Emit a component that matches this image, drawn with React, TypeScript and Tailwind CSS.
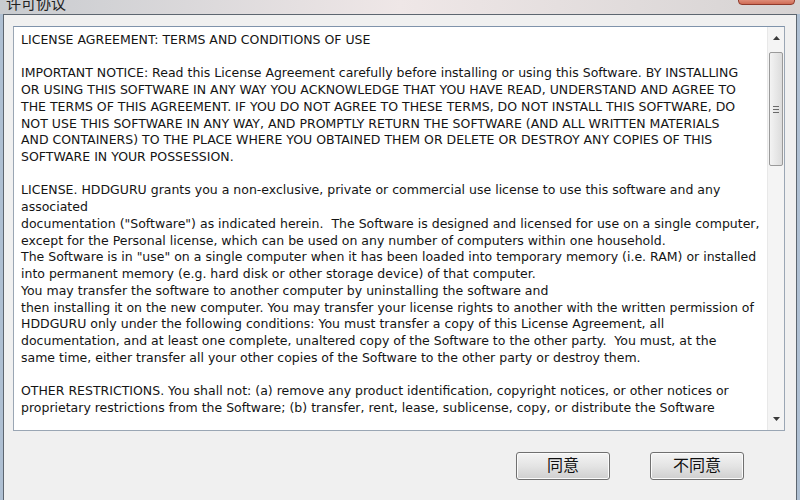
const lines = [
  "LICENSE AGREEMENT: TERMS AND CONDITIONS OF USE",
  "",
  "IMPORTANT NOTICE: Read this License Agreement carefully before installing or using this Software. BY INSTALLING",
  "OR USING THIS SOFTWARE IN ANY WAY YOU ACKNOWLEDGE THAT YOU HAVE READ, UNDERSTAND AND AGREE TO",
  "THE TERMS OF THIS AGREEMENT. IF YOU DO NOT AGREE TO THESE TERMS, DO NOT INSTALL THIS SOFTWARE, DO",
  "NOT USE THIS SOFTWARE IN ANY WAY, AND PROMPTLY RETURN THE SOFTWARE (AND ALL WRITTEN MATERIALS",
  "AND CONTAINERS) TO THE PLACE WHERE YOU OBTAINED THEM OR DELETE OR DESTROY ANY COPIES OF THIS",
  "SOFTWARE IN YOUR POSSESSION.",
  "",
  "LICENSE. HDDGURU grants you a non-exclusive, private or commercial use license to use this software and any",
  "associated",
  'documentation ("Software") as indicated herein.  The Software is designed and licensed for use on a single computer,',
  "except for the Personal license, which can be used on any number of computers within one household.",
  'The Software is in "use" on a single computer when it has been loaded into temporary memory (i.e. RAM) or installed',
  "into permanent memory (e.g. hard disk or other storage device) of that computer.",
  "You may transfer the software to another computer by uninstalling the software and",
  "then installing it on the new computer. You may transfer your license rights to another with the written permission of",
  "HDDGURU only under the following conditions: You must transfer a copy of this License Agreement, all",
  "documentation, and at least one complete, unaltered copy of the Software to the other party.  You must, at the",
  "same time, either transfer all your other copies of the Software to the other party or destroy them.",
  "",
  "OTHER RESTRICTIONS. You shall not: (a) remove any product identification, copyright notices, or other notices or",
  "proprietary restrictions from the Software; (b) transfer, rent, lease, sublicense, copy, or distribute the Software",
];

const Btn = ({ label }: { label: string }) => (
  <button className="w-[94px] h-[28px] rounded-[3px] border border-[#707070] bg-gradient-to-b from-[#f4f4f4] via-[#e4e4e4] to-[#cfcfcf] text-[16px] text-[#111] shadow-[inset_0_0_0_1px_#fbfbfb] flex items-center justify-center">
    {label}
  </button>
);

export default function App() {
  return (
    <div
      className="w-[800px] h-[500px] overflow-hidden flex flex-col bg-gradient-to-r from-[#aebfd2] via-[#b9c7d6] to-[#aebfd2]"
      style={{ fontFamily: '"DejaVu Sans", "Noto Sans CJK SC", sans-serif' }}
    >
      {/* title bar */}
      <div className="relative h-[14px] shrink-0 bg-gradient-to-r from-[#c8cbcf] via-[#efe7e7] to-[#d6d3d3]">
        <span className="absolute left-[6px] top-[-7px] text-[15px] text-[#222]">许可协议</span>
        <div className="absolute left-[738px] top-[-4px] w-[57px] h-[9px] rounded-b-[4px] border border-[#8f3a2c] bg-gradient-to-b from-[#e8a492] to-[#cf6b55]" />
      </div>

      <div className="flex-1 flex px-[3px]">
        <div className="flex-1 flex flex-col bg-[#f0f0f0] border-l border-t border-r border-[#5d6670] pl-[9px] pr-[11px] pt-[11px]">
          {/* text box */}
          <div className="h-[405px] flex bg-white border border-[#9aa6b4] border-t-[#7f93ab]">
            <div className="flex-1 pl-[7px] pt-[5px] text-[12.5px] leading-[16.73px] text-[#141414] overflow-hidden">
              {lines.map((l, i) => (
                <div key={i} className="whitespace-pre h-[16.73px]">
                  {l}
                </div>
              ))}
            </div>
            {/* scrollbar */}
            <div className="w-[17px] flex flex-col bg-[#f4f4f4] border-l border-[#e8e8e8]">
              <div className="h-[22px] flex items-center justify-center">
                <svg width="7" height="4" viewBox="0 0 7 4">
                  <path d="M0 4 L3.5 0 L7 4 Z" fill="#3a3a3a" />
                </svg>
              </div>
              <div className="mt-[3px] mx-[1px] h-[114px] rounded-[2px] border border-[#9a9a9a] bg-gradient-to-r from-[#f3f3f3] to-[#dcdcdc] flex items-center justify-center">
                <div className="flex flex-col gap-[2px]">
                  <div className="w-[6px] h-[1px] bg-[#6a6a6a]" />
                  <div className="w-[6px] h-[1px] bg-[#6a6a6a]" />
                  <div className="w-[6px] h-[1px] bg-[#6a6a6a]" />
                </div>
              </div>
              <div className="flex-1" />
              <div className="h-[22px] flex items-center justify-center">
                <svg width="7" height="4" viewBox="0 0 7 4">
                  <path d="M0 0 L3.5 4 L7 0 Z" fill="#3a3a3a" />
                </svg>
              </div>
            </div>
          </div>
          {/* buttons */}
          <div className="flex justify-end gap-[40px] pt-[21px] pr-[41px]">
            <Btn label="同意" />
            <Btn label="不同意" />
          </div>
        </div>
      </div>
    </div>
  );
}
